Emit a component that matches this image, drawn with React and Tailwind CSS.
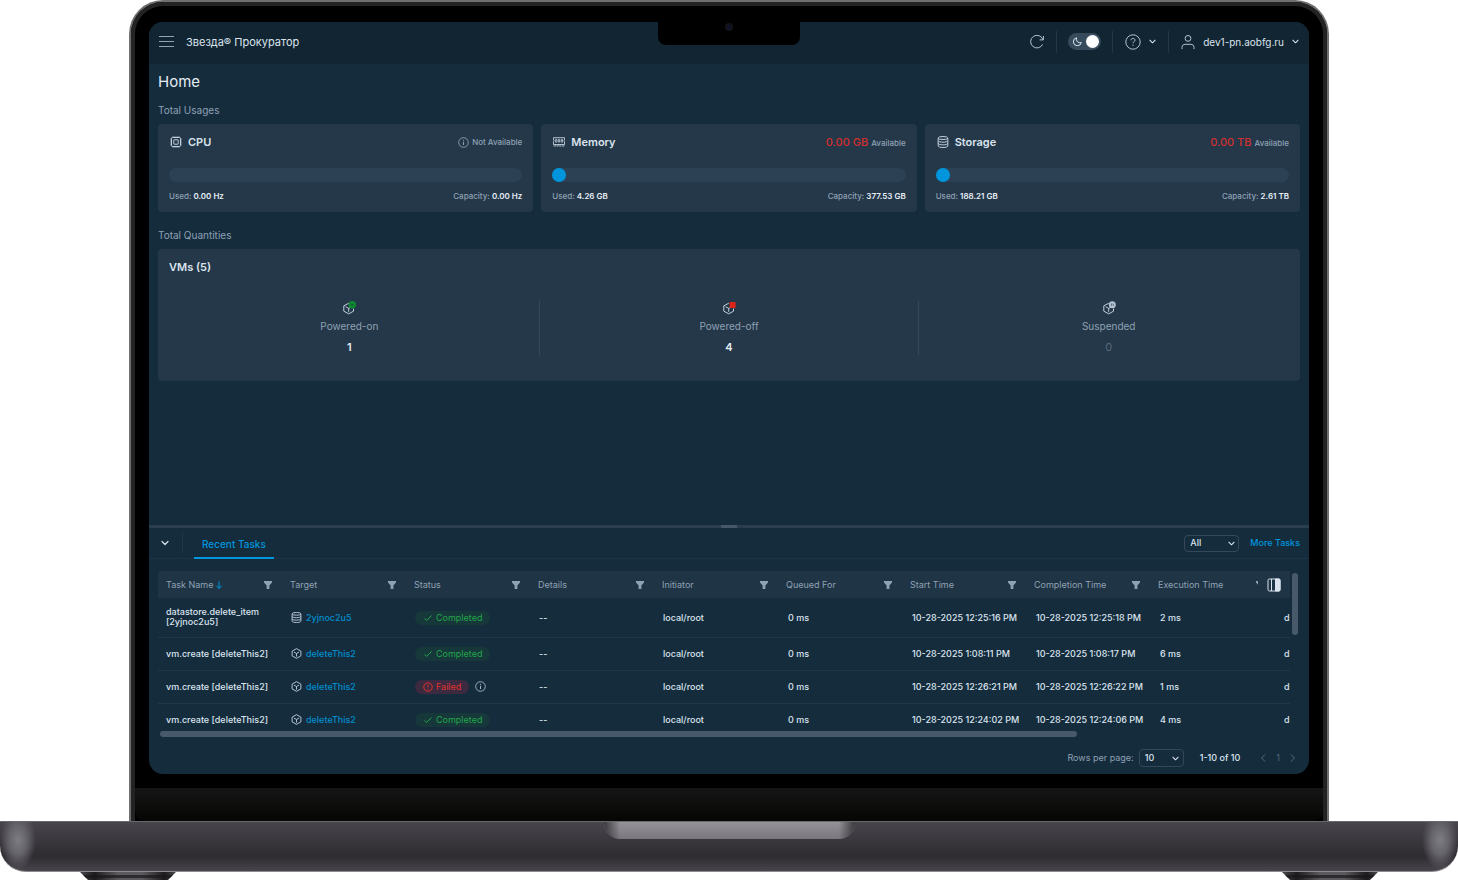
import React, { useState } from 'react';

const usages = [
  { name: 'CPU', icon: CpuIcon, available: null, used: '0.00 Hz', capacity: '0.00 Hz', percent: 0 },
  { name: 'Memory', icon: MemoryIcon, available: '0.00 GB', used: '4.26 GB', capacity: '377.53 GB', percent: 1 },
  { name: 'Storage', icon: StorageIcon, available: '0.00 TB', used: '188.21 GB', capacity: '2.61 TB', percent: 1 },
];

const quantities = [
  { label: 'Powered-on', value: 1, state: 'on' },
  { label: 'Powered-off', value: 4, state: 'off' },
  { label: 'Suspended', value: 0, state: 'suspended' },
];

const columns = [
  'Task Name',
  'Target',
  'Status',
  'Details',
  'Initiator',
  'Queued For',
  'Start Time',
  'Completion Time',
  'Execution Time',
];

const tasks = [
  { name: 'datastore.delete_item [2yjnoc2u5]', target: '2yjnoc2u5', kind: 'datastore', status: 'Completed', start: '10-28-2025 12:25:16 PM', end: '10-28-2025 12:25:18 PM', time: '2 ms' },
  { name: 'vm.create [deleteThis2]', target: 'deleteThis2', kind: 'vm', status: 'Completed', start: '10-28-2025 1:08:11 PM', end: '10-28-2025 1:08:17 PM', time: '6 ms' },
  { name: 'vm.create [deleteThis2]', target: 'deleteThis2', kind: 'vm', status: 'Failed', start: '10-28-2025 12:26:21 PM', end: '10-28-2025 12:26:22 PM', time: '1 ms' },
  { name: 'vm.create [deleteThis2]', target: 'deleteThis2', kind: 'vm', status: 'Completed', start: '10-28-2025 12:24:02 PM', end: '10-28-2025 12:24:06 PM', time: '4 ms' },
];

/* ---------- Icons ---------- */

function CpuIcon() {
  return (
    <svg className="size-3" viewBox="0 0 12 12" fill="none" stroke="currentColor">
      <rect x="1.5" y="1.5" width="9" height="9" rx="1.2" />
      <rect x="3.8" y="3.8" width="4.4" height="4.4" rx="0.4" />
      <path d="M3 .3v1M5 .3v1M7 .3v1M9 .3v1M3 10.7v1M5 10.7v1M7 10.7v1M9 10.7v1M.3 3h1M.3 5h1M.3 7h1M.3 9h1M10.7 3h1M10.7 5h1M10.7 7h1M10.7 9h1" strokeWidth="0.9" />
    </svg>
  );
}

function MemoryIcon() {
  return (
    <svg className="size-3" viewBox="0 0 12 12" fill="none" stroke="currentColor" strokeWidth="0.9">
      <path d="M.5 1.7h11v2.1a.9.9 0 0 0 0 1.7v3H.5v-3a.9.9 0 0 0 0-1.7z" />
      <path d="M2.6 3.4h1.3v2.7H2.6zM5.4 3.4h1.3v2.7H5.4zM8.2 3.4h1.3v2.7H8.2z" strokeWidth="0.8" />
      <path d="M1 8.5v1.8h1.6M11 8.5v1.8H9.4M4 10.3h1.2M6.8 10.3H8M2.6 8.5v1.8M4 8.5v1.8M5.3 8.5v1.8M6.7 8.5v1.8M8 8.5v1.8M9.4 8.5v1.8" strokeWidth="0.6" />
    </svg>
  );
}

function StorageIcon({ className = 'size-3' }) {
  return (
    <svg className={className} viewBox="0 0 12 12" fill="none" stroke="currentColor">
      <ellipse cx="6" cy="2" rx="4.8" ry="1.5" />
      <path d="M1.2 2v8c0 .8 2.1 1.5 4.8 1.5s4.8-.7 4.8-1.5V2" />
      <path d="M1.2 4.7c0 .8 2.1 1.5 4.8 1.5s4.8-.7 4.8-1.5M1.2 7.4c0 .8 2.1 1.5 4.8 1.5s4.8-.7 4.8-1.5" />
    </svg>
  );
}

function CubeIcon({ className = 'size-3' }) {
  return (
    <svg className={className} viewBox="0 0 12 12" fill="none" stroke="currentColor" strokeLinejoin="round">
      <path d="M6 .7l4.8 2.7v5.2L6 11.3 1.2 8.6V3.4z" />
      <path d="M3.2 4.4L6 6l2.8-1.6M6 6v3.4" />
    </svg>
  );
}

function VmStateIcon({ state }) {
  return (
    <svg className="size-[14px] text-[#c3d0de]" viewBox="0 0 14 14" fill="none" stroke="currentColor">
      <path d="M6.8 2.2L1.8 4.8v5.4l4.9 2.6 4.8-2.6V7.6" strokeLinejoin="round" />
      <path d="M3.6 5.7l3.100 1.700v3.400M6.700 7.400l1.600-.9" />
      {state === 'on' && (
        <g stroke="none">
          <circle cx="10.3" cy="3.8" r="3.7" fill="#0c8a2f" />
          <path d="M9.5 2.5l2 1.3-2 1.3z" fill="#243849" />
        </g>
      )}
      {state === 'off' && <rect x="7.6" y="1" width="6" height="6" rx="0.5" fill="#dc2518" stroke="none" />}
      {state === 'suspended' && (
        <g stroke="none">
          <circle cx="10.3" cy="3.8" r="3.5" fill="#b3c1d0" />
          <path d="M9 2.5h.8v2.6H9zM10.8 2.5h.8v2.6h-.8z" fill="#4b5e70" />
        </g>
      )}
    </svg>
  );
}

function InfoIcon() {
  return (
    <svg className="size-[11px]" viewBox="0 0 11 11" fill="none" stroke="currentColor">
      <circle cx="5.5" cy="5.5" r="4.8" strokeWidth="0.9" />
      <path d="M5.5 4.8v3.2M5.5 2.8v1" />
    </svg>
  );
}

function ChevronDown({ className }) {
  return (
    <svg className={className} viewBox="0 0 8 8" fill="none" stroke="currentColor" strokeWidth="1.2" strokeLinecap="round" strokeLinejoin="round">
      <path d="M1 2.5l3 3 3-3" />
    </svg>
  );
}

function FilterIcon() {
  return (
    <svg className="size-2" viewBox="0 0 8 8" fill="currentColor">
      <path d="M0 0h8v1.6L5.4 4.4V8H2.6V4.4L0 1.6z" />
    </svg>
  );
}

/* ---------- Top bar ---------- */

function TopBar() {
  const [dark, setDark] = useState(true);

  return (
    <header className="flex h-[42px] items-center bg-[#122532] px-2.5 pb-[3px] text-[#b4c3d3]">
      <button aria-label="Menu" className="mr-3">
        <svg className="size-[15px]" viewBox="0 0 15 15" stroke="currentColor">
          <path d="M0 2.5h15M0 7.5h15M0 12.5h15" opacity="0.8" />
        </svg>
      </button>
      <span className="pt-px text-[11px] text-[#dbe4ee]">Звезда® Прокуратор</span>

      <div className="ml-auto flex items-center">
        <button aria-label="Refresh" className="mr-3">
          <svg className="size-[14px]" viewBox="0 0 14 14" fill="none" stroke="currentColor">
            <path d="M12.6 9.4A6.3 6.3 0 1 1 12.9 4.6" />
            <path d="M13.4 1v3.9H9.6" />
          </svg>
        </button>
        <span className="h-[22px] w-px bg-[#20384a]" />
        <button
          role="switch"
          aria-checked={dark}
          aria-label="Dark mode"
          onClick={() => setDark(!dark)}
          className="mx-[11px] flex h-[17px] w-[33px] items-center justify-between rounded-full bg-[#364b5c] pr-[2px] pl-[5px]"
        >
          <svg className="size-[9px]" viewBox="0 0 9 9" fill="none" stroke="#dbe4ee" strokeLinejoin="round">
            <path d="M3.6.8A4 4 0 1 0 8.3 5.6 3.7 3.7 0 0 1 3.6.8z" />
          </svg>
          <span className="size-[13px] rounded-full bg-white" />
        </button>
        <span className="h-[22px] w-px bg-[#20384a]" />
        <button aria-label="Help" className="mx-3 flex items-center gap-2">
          <svg className="size-4" viewBox="0 0 16 16" fill="none" stroke="currentColor">
            <circle cx="8" cy="8" r="7.2" />
            <path d="M6 6.3c0-1.2.9-1.9 2-1.9s2 .7 2 1.8c0 1.5-2 1.5-2 3M8 10.6v1.2" />
          </svg>
          <ChevronDown className="size-[7px] text-[#dbe4ee]" />
        </button>
        <span className="h-[22px] w-px bg-[#20384a]" />
        <button className="ml-3 flex items-center gap-2 text-[#dbe4ee]">
          <svg className="size-[14px] text-[#b4c3d3]" viewBox="0 0 14 14" fill="none" stroke="currentColor">
            <circle cx="7" cy="3.4" r="2.9" />
            <path d="M1 14v-1.6c0-1.9 1.4-3.1 3.1-3.1h5.8c1.7 0 3.1 1.2 3.1 3.1V14" />
          </svg>
          <span className="pt-px text-[10px]">dev1-pn.aobfg.ru</span>
          <ChevronDown className="size-[7px]" />
        </button>
      </div>
    </header>
  );
}

/* ---------- Overview ---------- */

function UsageCard({ usage }) {
  const Icon = usage.icon;
  return (
    <section className="flex-1 rounded-[4px] bg-[#243849] px-[11px] pt-2.5 pb-2.5">
      <div className="flex h-4 items-center">
        <span className="mr-1.5 ml-px text-[#c3d0de]">
          <Icon />
        </span>
        <h3 className="text-[11px] font-semibold text-[#dbe4ee]">{usage.name}</h3>
        {usage.available ? (
          <p className="ml-auto flex items-baseline gap-[3px]">
            <span className="text-[11px] font-medium text-[#d32f2f]">{usage.available}</span>
            <span className="text-[8px] font-medium text-[#8fa1b4]">Available</span>
          </p>
        ) : (
          <p className="ml-auto flex items-center gap-[3px] text-[#8fa1b4]">
            <InfoIcon />
            <span className="text-[8px] font-medium">Not Available</span>
          </p>
        )}
      </div>
      <div
        role="progressbar"
        aria-label={usage.name}
        aria-valuenow={usage.percent}
        className="mt-[18px] h-[14px] rounded-full bg-[#2c4154]"
      >
        {usage.percent > 0 && (
          <div className="h-[14px] min-w-[14px] rounded-full bg-[#0095dc]" style={{ width: `${usage.percent}%` }} />
        )}
      </div>
      <div className="mt-2 flex h-3 items-center justify-between text-[8px] font-medium text-[#8fa1b4]">
        <p>
          Used: <b className="font-semibold text-[#e6edf5]">{usage.used}</b>
        </p>
        <p>
          Capacity: <b className="font-semibold text-[#e6edf5]">{usage.capacity}</b>
        </p>
      </div>
    </section>
  );
}

function Overview() {
  return (
    <main className="flex-1 px-[9px] pb-4">
      <h1 className="pt-2 text-[15px] leading-5 text-[#e6edf5]">Home</h1>
      <h2 className="mt-3 text-[10px] leading-3 text-[#8fa1b4]">Total Usages</h2>
      <div className="mt-2 flex gap-2">
        {usages.map((usage) => (
          <UsageCard key={usage.name} usage={usage} />
        ))}
      </div>

      <h2 className="mt-[17px] text-[10px] leading-3 text-[#8fa1b4]">Total Quantities</h2>
      <section className="mt-2 rounded-[4px] bg-[#243849] pt-2.5 pb-[26px]">
        <h3 className="px-[11px] text-[11px] leading-4 font-semibold text-[#dbe4ee]">VMs (5)</h3>
        <div className="mt-[26px] flex divide-x divide-[#34495a] px-0.5">
          {quantities.map((item) => (
            <div key={item.label} className="flex flex-1 flex-col items-center">
              <VmStateIcon state={item.state} />
              <p className="mt-[3px] text-[10px] leading-4 text-[#8fa1b4]">{item.label}</p>
              <p className={item.value ? 'mt-[5px] text-[11px] leading-4 font-semibold text-[#e6edf5]' : 'mt-[5px] text-[11px] leading-4 text-[#566a7c]'}>
                {item.value}
              </p>
            </div>
          ))}
        </div>
      </section>
    </main>
  );
}

/* ---------- Recent tasks ---------- */

function StatusBadge({ status }) {
  if (status === 'Failed') {
    return (
      <div className="flex items-center gap-1.5">
        <span className="flex h-[14px] items-center gap-[3px] rounded-full bg-[#3c2a40] px-2 font-normal text-[#e0332e]">
          <svg className="size-[10px]" viewBox="0 0 10 10" fill="none" stroke="currentColor">
            <circle cx="5" cy="5" r="4.2" />
            <path d="M5 2.6v2.9M5 6.5v1" />
          </svg>
          Failed
        </span>
        <button aria-label="Failure details" className="text-[#a9b9c9]">
          <InfoIcon />
        </button>
      </div>
    );
  }
  return (
    <span className="inline-flex h-[14px] items-center gap-[3px] rounded-full bg-[#17383b] px-2 align-middle font-normal text-[#22a648]">
      <svg className="size-[10px]" viewBox="0 0 10 10" fill="none" stroke="currentColor">
        <path d="M1.5 5.4l2.2 2L8.5 2.5" />
      </svg>
      {status}
    </span>
  );
}

function TaskTable() {
  return (
    <div className="flex gap-0.5 pl-[9px]">
      <div className="relative min-w-0 flex-1">
        <div className="h-[160px] overflow-hidden rounded-tl-[4px]">
          <table className="w-[1240px] table-fixed border-collapse text-left text-[9px]">
            <thead>
              <tr className="h-[27px] bg-[#1f3445] text-[#8fa1b4]">
                {columns.map((column, index) => (
                  <th key={column} className="pr-2.5 pl-2 font-normal">
                    <div className="flex items-center justify-between">
                      <span className="flex items-center gap-0.5">
                        {column}
                        {index === 0 && (
                          <svg className="size-2 text-[#0095dc]" viewBox="0 0 8 8" fill="none" stroke="currentColor">
                            <path d="M4 .5v7M1.2 4.7L4 7.5l2.8-2.8" />
                          </svg>
                        )}
                      </span>
                      <button aria-label={`Filter ${column}`}>
                        <FilterIcon />
                      </button>
                    </div>
                  </th>
                ))}
                <th />
              </tr>
            </thead>
            <tbody className="font-medium text-[#dbe4ee]">
              {tasks.map((task, index) => (
                <tr key={index} className={index === 0 ? 'h-[39px] border-b border-[#20364a]' : 'h-[33px] border-b border-[#20364a]'}>
                  <td className="px-2 leading-[10px]">{task.name}</td>
                  <td className="px-[9px]">
                    <a href="#target" className="flex items-center gap-1 text-[#008dcc]">
                      <span className="text-[#c3d0de]">
                        {task.kind === 'vm' ? <CubeIcon className="size-[11px]" /> : <StorageIcon className="size-[11px]" />}
                      </span>
                      {task.target}
                    </a>
                  </td>
                  <td className="px-[9px]">
                    <StatusBadge status={task.status} />
                  </td>
                  <td className="px-[9px]">--</td>
                  <td className="px-[9px]">local/root</td>
                  <td className="px-2.5">0 ms</td>
                  <td className="pl-2.5 whitespace-nowrap">{task.start}</td>
                  <td className="pl-2.5 whitespace-nowrap">{task.end}</td>
                  <td className="px-2.5">{task.time}</td>
                  <td className="pl-2.5">d</td>
                </tr>
              ))}
            </tbody>
          </table>
        </div>
        <button
          aria-label="Choose columns"
          className="absolute top-0 right-0 flex h-[27px] w-8 items-center justify-center bg-[#1f3445] text-[#dbe4ee]"
        >
          <svg className="size-[14px]" viewBox="0 0 14 14" fill="none" stroke="currentColor">
            <rect x="1" y="1" width="12" height="12" rx="1.5" />
            <path d="M4.5 1v12" />
            <path d="M8.5 1H12a1 1 0 0 1 1 1v10a1 1 0 0 1-1 1H8.5z" fill="currentColor" />
          </svg>
        </button>
        <div className="ml-0.5 h-1.5 w-[81%] rounded-full bg-[#47596b]" />
      </div>
      <div className="mt-0.5 mr-[11px] h-[62px] w-1.5 rounded-full bg-[#47596b]" />
    </div>
  );
}

function RecentTasks() {
  return (
    <section className="text-[9px] text-[#dbe4ee]">
      <div className="flex h-[3px] justify-center bg-[#2a3e50]">
        <span className="w-4 bg-[#44586a]" />
      </div>
      <div className="flex h-[31px] items-center border-b border-[#1e3446] pr-[9px] pl-3">
        <button aria-label="Collapse panel">
          <ChevronDown className="size-2" />
        </button>
        <span className="ml-[13px] h-5 w-px bg-[#20384a]" />
        <button className="ml-[11px] h-[31px] border-b-2 border-[#0095dc] px-2 pt-1 text-[10px] font-medium text-[#0095dc]">
          Recent Tasks
        </button>
        <div className="relative ml-auto">
          <select aria-label="Task filter" className="block h-[17px] w-[55px] appearance-none rounded-[4px] border border-[#33495b] pl-[5px] font-medium">
            <option>All</option>
          </select>
          <ChevronDown className="pointer-events-none absolute top-[5px] right-1 size-[7px]" />
        </div>
        <a href="#tasks" className="ml-[11px] font-medium text-[#0095dc]">
          More Tasks
        </a>
      </div>

      <div className="pt-3">
        <TaskTable />
      </div>

      <div className="flex items-center justify-end pt-3 pr-[13px] pb-[7px]">
        <label htmlFor="rows" className="mr-[5px] text-[#8fa1b4]">
          Rows per page:
        </label>
        <div className="relative">
          <select id="rows" className="block h-[18px] w-[45px] appearance-none rounded-[4px] border border-[#33495b] pl-[5px] font-medium">
            <option>10</option>
          </select>
          <ChevronDown className="pointer-events-none absolute top-[6px] right-[5px] size-[7px]" />
        </div>
        <span className="mx-4 font-medium">1-10 of 10</span>
        <nav aria-label="Pagination" className="ml-1 flex items-center gap-2.5 text-[#566a7c]">
          <button aria-label="Previous page">
            <svg className="h-2 w-[6px]" viewBox="0 0 6 8" fill="none" stroke="currentColor">
              <path d="M5 .5L1.5 4 5 7.5" />
            </svg>
          </button>
          <button>1</button>
          <button aria-label="Next page">
            <svg className="h-2 w-[6px]" viewBox="0 0 6 8" fill="none" stroke="currentColor">
              <path d="M1 .5L4.5 4 1 7.5" />
            </svg>
          </button>
        </nav>
      </div>
    </section>
  );
}

/* ---------- Laptop body ---------- */

function Foot() {
  return (
    <svg className="h-2 w-24" viewBox="0 0 96 8">
      <defs>
        <linearGradient id="foot" x1="0" x2="1">
          <stop offset="0" stopColor="#4a474d" />
          <stop offset="0.15" stopColor="#1c1a1c" />
          <stop offset="0.4" stopColor="#5c5a5e" />
          <stop offset="0.65" stopColor="#5c5a5e" />
          <stop offset="0.88" stopColor="#1c1a1c" />
          <stop offset="1" stopColor="#4a474d" />
        </linearGradient>
      </defs>
      <path d="M0 0h96l-8 8H8z" fill="url(#foot)" />
      <path d="M3 3h90l-3 3H6z" fill="#19171a" opacity="0.7" />
    </svg>
  );
}

function LaptopBase() {
  return (
    <div className="pb-0.5">
      <div className="h-[51px] overflow-hidden rounded-b-[26px] border-t border-b border-t-[#6a686c] border-b-[#8c8a8e] bg-linear-to-b from-[#48454c] via-[#2e2b31] via-70% to-[#48464c]">
        <div className="flex h-full justify-between">
          <div className="w-16 bg-radial-[18px_30px_at_18px_18px] from-[#7f7d84] via-[#65636a] via-50% to-transparent to-100%" />
          <div className="flex h-[17px] w-[251px] overflow-hidden rounded-b-[16px] bg-linear-to-b from-[#949197] to-[#7a777e]">
            <div className="w-4 bg-linear-to-r from-[#3b393e] to-transparent" />
            <div className="ml-auto w-4 bg-linear-to-l from-[#3b393e] to-transparent" />
          </div>
          <div className="w-16 bg-radial-[18px_30px_at_46px_18px] from-[#7f7d84] via-[#65636a] via-50% to-transparent to-100%" />
        </div>
      </div>
      <div className="flex justify-between px-20">
        <Foot />
        <Foot />
      </div>
    </div>
  );
}

export default function App() {
  return (
    <div className="flex min-h-screen flex-col bg-white font-['Inter',sans-serif] leading-normal">
      <div className="mx-[129px] flex flex-1 flex-col rounded-t-[34px] border-2 border-b-0 border-[#6f6f6f] bg-[#0a0a0a]">
        <div className="flex flex-1 flex-col rounded-t-[32px] border-4 border-b-0 border-[#232323] bg-black">
          <div className="relative flex flex-1 flex-col px-[14px] pt-4 pb-[14px]">
            <div className="flex flex-1 flex-col overflow-hidden rounded-[14px] bg-[#152c3d]">
              <TopBar />
              <Overview />
              <RecentTasks />
            </div>
            {/* Camera notch */}
            <div className="absolute inset-x-0 top-4 flex justify-center">
              <div className="flex h-[23px] w-[142px] justify-center rounded-b-[8px] bg-black pt-px">
                <span className="size-2 rounded-full border-2 border-[#131318] bg-[#0c0f30]" />
              </div>
            </div>
          </div>
          <div className="h-[33px] rounded-b-[10px] bg-linear-to-b from-[#161616] to-[#060605]" />
        </div>
      </div>
      <LaptopBase />
    </div>
  );
}
